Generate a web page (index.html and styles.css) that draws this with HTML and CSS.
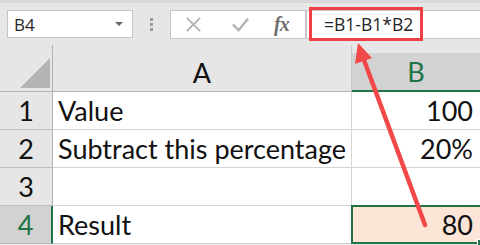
FILE: index.html
```html
<!DOCTYPE html>
<html lang="en">
<head>
  <meta charset="UTF-8" />
  <title>Subtract percentage</title>
  <link rel="stylesheet" href="styles.css">
</head>
<body>
  <div class="app">
    <div class="toolbar">
      <div class="name-box">
        <span>B4</span>
        <span class="caret"></span>
      </div>
      <div class="grip"><i></i><i></i><i></i></div>
      <div class="icon-box">
        <svg class="ic" width="17" height="17" viewBox="0 0 18 18"><path d="M2 2 L16 16 M16 2 L2 16" stroke="#b3b3b3" stroke-width="2" fill="none"/></svg>
        <svg class="ic" width="19" height="17" viewBox="0 0 20 18"><path d="M2 9 L8 15 L18 3" stroke="#b3b3b3" stroke-width="2.6" fill="none"/></svg>
        <span class="fx">fx</span>
      </div>
      <div class="formula">
        <div class="highlight">=B1-B1*B2</div>
      </div>
    </div>

    <div class="sheet">
      <div class="corner">
        <svg width="53" height="44" viewBox="0 0 53 44"><polygon points="20,40 50,10 50,40" fill="#b4b4b4"/></svg>
      </div>
      <div class="col-head">A</div>
      <div class="col-head selected"><span>B</span></div>

      <div class="row-head">1</div>
      <div class="cell">Value</div>
      <div class="cell num">100</div>

      <div class="row-head">2</div>
      <div class="cell">Subtract this percentage</div>
      <div class="cell num">20%</div>

      <div class="row-head">3</div>
      <div class="cell"></div>
      <div class="cell num"></div>

      <div class="row-head active">4</div>
      <div class="cell">Result</div>
      <div class="cell num active-cell">80<span class="handle"></span></div>
    </div>

    <svg class="arrow" width="480" height="245" viewBox="0 0 480 245">
      <line x1="425" y1="225" x2="364" y2="60" stroke="#f24848" stroke-width="4.5" stroke-linecap="round"/>
      <polygon points="358,43 372,58 355,64" fill="#f24848"/>
    </svg>
  </div>
</body>
</html>
```

FILE: styles.css
```css
body {
  margin: 0;
  background: #e6e6e6;
  font-family: 'Lato', 'Open Sans', sans-serif;
  color: #111;
}
.app {
  position: relative;
  width: 480px;
  height: 245px;
  overflow: hidden;
}
.toolbar {
  display: flex;
  align-items: center;
  height: 45px;
  border-top: 3px solid #d9d9d9;
  box-sizing: border-box;
  padding-left: 7px;
}
.name-box {
  display: flex;
  align-items: center;
  justify-content: space-between;
  width: 126px;
  height: 28px;
  box-sizing: border-box;
  background: white;
  border: 1px solid #c6c6c6;
  padding: 0 9px 0 6px;
  font-family: 'Open Sans', sans-serif;
  font-size: 17px;
  color: #262626;
}
.caret {
  width: 0;
  height: 0;
  border-left: 4px solid transparent;
  border-right: 4px solid transparent;
  border-top: 4px solid #666;
}
.grip {
  display: flex;
  flex-direction: column;
  gap: 2px;
  width: 37px;
  align-items: center;
}
.grip i {
  width: 3px;
  height: 3px;
  background: #9a9a9a;
}
.icon-box {
  display: flex;
  align-items: center;
  width: 136px;
  height: 29px;
  box-sizing: border-box;
  background: white;
  border: 1px solid #c6c6c6;
  padding-left: 14px;
}
.icon-box .ic:first-child {
  margin-right: 29px;
}
.fx {
  margin-left: 24px;
  font-family: 'Liberation Serif', serif;
  font-style: italic;
  font-weight: bold;
  font-size: 20px;
  color: #6e6e6e;
  letter-spacing: -1px;
}
.formula {
  flex: 1;
  height: 29px;
  box-sizing: border-box;
  background: white;
  border: 1px solid #c6c6c6;
  border-right: none;
  display: flex;
  align-items: center;
}
.highlight {
  margin-left: 2px;
  width: 114px;
  height: 34px;
  box-sizing: border-box;
  border: 3px solid #ee4045;
  padding-left: 12px;
  display: flex;
  align-items: center;
  font-family: 'Open Sans', sans-serif;
  font-size: 17.5px;
  color: #262626;
}
.sheet {
  display: grid;
  grid-template-columns: 53px 299px 128px;
  grid-template-rows: 47px 38px 38px 38px 38px;
  font-size: 27px;
}
.corner {
  border-right: 1px solid #b3b3b3;
  border-bottom: 1px solid #b3b3b3;
}
.corner svg {
  display: block;
  margin-top: 3px;
}
.col-head {
  display: flex;
  align-items: flex-end;
  justify-content: center;
  padding-bottom: 2px;
  border-right: 1px solid #c8c8c8;
  border-bottom: 1px solid #b3b3b3;
}
.col-head.selected {
  padding: 0;
  border-bottom: none;
  border-right: none;
  align-items: stretch;
  margin-top: 8px;
}
.col-head.selected span {
  flex: 1;
  display: flex;
  align-items: center;
  justify-content: center;
  background: #d2d2d2;
  border-bottom: 2px solid #217346;
  color: #217346;
}
.row-head {
  display: flex;
  align-items: center;
  justify-content: center;
  border-right: 1px solid #b3b3b3;
  border-bottom: 1px solid #bdbdbd;
}
.row-head.active {
  background: #d2d2d2;
  color: #217346;
  border-right: 2px solid #217346;
}
.cell {
  display: flex;
  align-items: center;
  min-width: 0;
  white-space: nowrap;
  background: white;
  border-right: 1px solid #d4d4d4;
  border-bottom: 1px solid #d4d4d4;
  padding: 0 0 0 5px;
}
.cell.num {
  justify-content: flex-end;
  border-right: none;
  padding-right: 7px;
}
.active-cell {
  position: relative;
  background: #fce4d6;
  border: 2px solid #217346;
  margin: -1px 0 0 -1px;
  padding-right: 6px;
}
.handle {
  position: absolute;
  right: -4px;
  bottom: -4px;
  width: 5px;
  height: 5px;
  background: #217346;
  border: 1px solid white;
}
.arrow {
  position: absolute;
  left: 0;
  top: 0;
}
```
